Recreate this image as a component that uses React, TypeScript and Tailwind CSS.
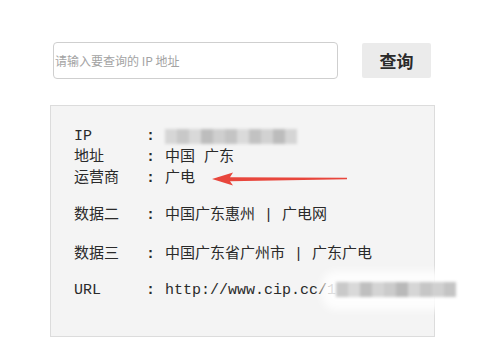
import React from "react";

const mono = "font-['Liberation_Mono','Noto_Sans_CJK_SC',monospace]";

const ipBlocks = ["#d6d6d6", "#c8c8c8", "#d9d9d9", "#bdbdbd", "#cfcfcf", "#c4c4c4", "#dadada", "#c2c2c2", "#d2d2d2", "#bcbcbc", "#d5d5d5"];
const urlBlocks = ["#c9c9c9", "#d9d9d9", "#bfbfbf", "#d4d4d4", "#cbcbcb", "#b9b9b9", "#d6d6d6", "#c6c6c6", "#d0d0d0", "#c4c4c4"];

const Blur = ({ blocks, className }: { blocks: string[]; className: string }) => (
  <span className={`inline-flex h-[15px] blur-[1.5px] align-middle ${className}`}>
    {blocks.map((c, i) => (
      <span key={i} className="h-full w-[12px]" style={{ backgroundColor: c }} />
    ))}
  </span>
);

const Row = ({ label, children, className = "" }: { label: string; children: React.ReactNode; className?: string }) => (
  <div className={`flex h-[21px] items-center leading-[21px] ${className}`}>
    <span className="w-[72px] shrink-0">{label}</span>
    <span className="w-[19px] shrink-0 font-bold">:</span>
    <span className="whitespace-pre">{children}</span>
  </div>
);

export default function App() {
  return (
    <div className="relative h-[353px] w-[483px] overflow-hidden bg-white">
      <div className="flex items-start pl-[53px] pt-[42px]">
        <div className="flex h-[37px] w-[285px] items-center rounded-[4px] border border-[#cfcfcf] bg-white pl-px">
          <span className="font-['Noto_Sans_CJK_SC',sans-serif] text-[12px] text-[#a3a3a3]">请输入要查询的 IP 地址</span>
        </div>
        <button className="ml-[24px] mt-px flex h-[35px] w-[69px] items-center justify-center rounded-[2px] bg-[#ebebeb] font-['Noto_Sans_CJK_SC',sans-serif] text-[17px] font-bold text-[#2b2b2b]">
          查询
        </button>
      </div>

      <div className={`ml-[50px] mt-[26px] h-[232px] w-[385px] border border-[#dcdcdc] bg-[#f4f4f4] pl-[23px] pt-[20px] text-[15px] text-[#2a2a2a] ${mono}`}>
        <Row label="IP">
          <Blur blocks={ipBlocks} className="" />
        </Row>
        <Row label="地址">{"中国 广东"}</Row>
        <Row label="运营商">广电</Row>
        <Row label="数据二" className="mt-[16px]">{"中国广东惠州 | 广电网"}</Row>
        <Row label="数据三" className="mt-[18px]">{"中国广东省广州市 | 广东广电"}</Row>
        <Row label="URL" className="mt-[15px]">
          <span>http://www.cip.cc/1</span>
          <span className="relative inline-block align-middle">
            <span className="absolute -inset-x-[14px] -inset-y-[9px] rounded-[14px] bg-white/85 blur-[4px]" />
            <Blur blocks={urlBlocks} className="relative" />
          </span>
        </Row>
      </div>

      <svg className="absolute left-[205px] top-[168px]" width="150" height="22" viewBox="0 0 150 22">
        <polygon points="7,11 28,4.5 25,9.2 142,9.8 142,11.2 25,13.2 28,17.5" fill="#e8463c" />
      </svg>
    </div>
  );
}
